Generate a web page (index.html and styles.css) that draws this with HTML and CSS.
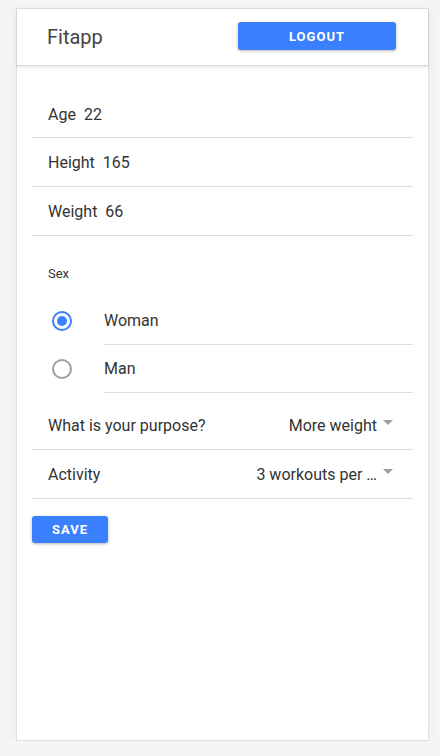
FILE: index.html
```html
<!DOCTYPE html>
<html>
<head>
<meta charset="utf-8">
<link rel="stylesheet" href="styles.css">
</head>
<body>
<div class="card">
  <header class="bar">
    <span class="title">Fitapp</span>
    <button class="btn btn-logout">LOGOUT</button>
  </header>
  <form class="form">
    <div class="field first"><span class="lbl">Age</span><span class="val">22</span></div>
    <div class="field"><span class="lbl">Height</span><span class="val">165</span></div>
    <div class="field"><span class="lbl">Weight</span><span class="val">66</span></div>
    <div class="sex-label">Sex</div>
    <div class="radio-row">
      <span class="radio checked"></span>
      <span class="radio-text">Woman</span>
    </div>
    <div class="radio-row">
      <span class="radio"></span>
      <span class="radio-text">Man</span>
    </div>
    <div class="select-row purpose">
      <span class="lbl">What is your purpose?</span>
      <span class="sel"><span class="sel-val">More weight</span><span class="arrow"></span></span>
    </div>
    <div class="select-row">
      <span class="lbl">Activity</span>
      <span class="sel"><span class="sel-val">3 workouts per …</span><span class="arrow"></span></span>
    </div>
    <button type="button" class="btn btn-save">SAVE</button>
  </form>
</div>
</body>
</html>
```
FILE: styles.css
```css
* { box-sizing: border-box; }
html, body { margin: 0; padding: 0; }
body {
  background: #f5f5f5;
  font-family: Roboto, "Liberation Sans", sans-serif;
  color: #333;
  padding: 8px 11px 0 16px;
}
.card {
  background: #fff;
  border: 1px solid #e0e0e0;
  height: 733px;
  box-shadow: 0 2px 12px rgba(0,0,0,0.05);
}
.bar {
  height: 57px;
  display: flex;
  align-items: center;
  justify-content: space-between;
  padding: 0 32px 0 30px;
  border-bottom: 1px solid #d8d8d8;
  box-shadow: 0 1px 3px rgba(0,0,0,0.12);
}
.title {
  font-size: 20px;
  color: #444;
  font-weight: 400;
  margin-top: -1px;
}
.btn {
  border: none;
  background: #3a7ffe;
  color: #fff;
  font-family: Roboto, "Liberation Sans", sans-serif;
  font-weight: 700;
  font-size: 13px;
  letter-spacing: 1px;
  border-radius: 3px;
  box-shadow: 0 1px 3px rgba(0,0,0,0.3);
  padding: 0;
  height: 28px;
}
.btn-logout { width: 158px; margin-top: -2px; }
.form {
  padding: 0 15px;
  display: flex;
  flex-direction: column;
}
.field {
  height: 49px;
  border-bottom: 1px solid #ddd;
  display: flex;
  align-items: center;
  padding-left: 16px;
  font-size: 16px;
}
.field.first { height: 72px; padding-top: 25px; }
.lbl { color: #333; }
.val { margin-left: 8px; color: #333; }
.sex-label {
  font-size: 13px;
  line-height: 16px;
  padding: 30px 0 0 16px;
  height: 61px;
}
.radio-row {
  display: flex;
  align-items: center;
  height: 48px;
  font-size: 16px;
}
.radio {
  width: 20px;
  height: 20px;
  border-radius: 50%;
  border: 2px solid #9e9e9e;
  margin: 0 32px 0 20px;
  flex: none;
  position: relative;
}
.radio.checked { border-color: #3a7ffe; }
.radio.checked::after {
  content: "";
  position: absolute;
  left: 3px; top: 3px;
  width: 10px; height: 10px;
  border-radius: 50%;
  background: #3a7ffe;
}
.radio-text {
  flex: 1;
  height: 48px;
  display: flex;
  align-items: center;
  border-bottom: 1px solid #ddd;
}
.select-row {
  height: 49px;
  border-bottom: 1px solid #ddd;
  display: flex;
  align-items: center;
  justify-content: space-between;
  padding: 0 20px 0 16px;
  font-size: 16px;
}
.select-row.purpose { height: 57px; padding-top: 8px; }
.sel { display: flex; align-items: center; }
.sel-val { color: #333; }
.arrow {
  width: 0; height: 0;
  border-left: 5px solid transparent;
  border-right: 5px solid transparent;
  border-top: 5px solid #9e9e9e;
  margin-left: 6px;
  margin-top: -6px;
}
.btn-save {
  width: 76px;
  margin-top: 17px;
  height: 27px;
}
```
